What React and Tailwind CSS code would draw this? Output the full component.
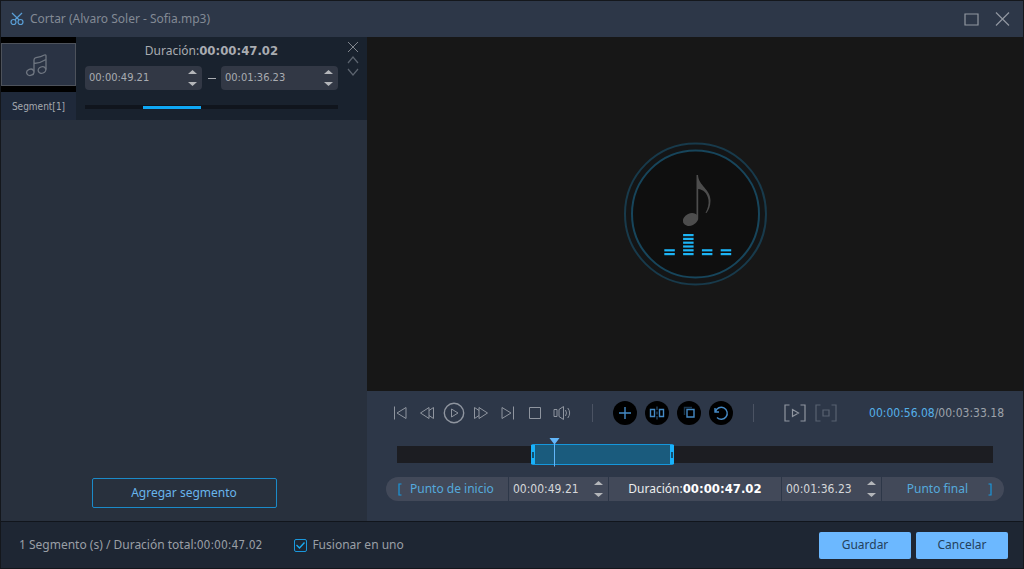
import {useState} from "react";

const playback = [
    {
        label: "Inicio",
        icon: (
            <svg width="14" height="14" viewBox="0 0 14 14">
                <path d="M1.5 0.5V13.5M13 1.5V12.5L4 7Z" />
            </svg>
        ),
    },
    {
        label: "Retroceder",
        icon: (
            <svg width="16" height="14" viewBox="0 0 16 14">
                <path d="M10 1.5V12.5L1.5 7ZM10 4.5L14.5 1.5V12.5L10 9.5" />
            </svg>
        ),
    },
    {
        label: "Reproducir",
        icon: (
            <svg width="22" height="22" viewBox="0 0 22 22">
                <circle cx="11" cy="11" r="9.7" strokeWidth="1.4" />
                <path d="M8.5 7V15L15 11Z" />
            </svg>
        ),
    },
    {
        label: "Avanzar",
        icon: (
            <svg width="16" height="14" viewBox="0 0 16 14">
                <path d="M6 1.5V12.5L14.5 7ZM6 4.5L1.5 1.5V12.5L6 9.5" />
            </svg>
        ),
    },
    {
        label: "Final",
        icon: (
            <svg width="14" height="14" viewBox="0 0 14 14">
                <path d="M12.5 0.5V13.5M1 1.5V12.5L10 7Z" />
            </svg>
        ),
    },
    {
        label: "Detener",
        icon: (
            <svg width="12" height="12" viewBox="0 0 12 12">
                <path d="M0.5 0.5H11.5V11.5H0.5Z" />
            </svg>
        ),
    },
    {
        label: "Volumen",
        icon: (
            <svg width="18" height="16" viewBox="0 0 18 16">
                <path d="M1 4.5H4V11.5H1ZM6 4.5L10.5 1.5V14.5L6 11.5ZM12.5 5Q14.5 8 12.5 11M14.8 3Q18.5 8 14.8 13" />
            </svg>
        ),
    },
];

const actions = [
    {
        label: "Agregar",
        icon: <path d="M12 6V18M6 12H18" />,
    },
    {
        label: "Dividir",
        icon: (
            <>
                <path d="M5.5 8.5H9.5V15.5H5.5ZM14.5 8.5H18.5V15.5H14.5Z" />
                <path d="M12 5.5V9M12 10.5V13.5M12 15V18.5" opacity="0.5" />
            </>
        ),
    },
    {
        label: "Copiar",
        icon: (
            <>
                <path d="M10 8.5H17V16H10Z" />
                <path d="M7.5 14V6.5H15" opacity="0.4" />
            </>
        ),
    },
    {
        label: "Restablecer",
        icon: <path d="M6 7V11H10M6.5 10.5A6 6 0 1 1 8 16.5" />,
    },
];

// columns of the equalizer, number of bars in each one
const equalizer = [2, 6, 2, 2];

function Time({children}) {
    return <span className="font-['DejaVu_Sans_Condensed','DejaVu_Sans',sans-serif]">{children}</span>;
}

function Spinner() {
    return (
        <div className="flex flex-col gap-2 px-[5px]">
            <button aria-label="Aumentar" className="block">
                <svg width="9" height="4" viewBox="0 0 9 4" className="fill-[#b4b6ba]">
                    <path d="M0 4L4.5 0L9 4Z" />
                </svg>
            </button>
            <button aria-label="Disminuir" className="block">
                <svg width="9" height="4" viewBox="0 0 9 4" className="fill-[#b4b6ba]">
                    <path d="M0 0L4.5 4L9 0Z" />
                </svg>
            </button>
        </div>
    );
}

function TimeBox({label, value, onChange}) {
    return (
        <div className="flex h-6 w-[117px] items-center rounded-sm bg-[#323845]">
            <input
                aria-label={label}
                value={value}
                onChange={(e) => onChange(e.target.value)}
                className="w-full min-w-0 bg-transparent pl-1 font-['DejaVu_Sans_Condensed','DejaVu_Sans',sans-serif] text-[11px] text-[#a9acb1] outline-none"
            />
            <Spinner />
        </div>
    );
}

function Separator() {
    return <div className="h-[18px] w-px bg-[#4b5363]" />;
}

function Segment({start, end, setStart, setEnd}) {
    return (
        <div className="flex h-[83px] bg-[#19222e]">
            <div className="flex w-[75px] shrink-0 flex-col">
                <div className="bg-black py-1.5">
                    <div className="flex h-[43px] items-center justify-center border border-[#4d525b] bg-[#2a3344] pr-1">
                        <svg width="24" height="24" viewBox="0 0 24 24" className="fill-none stroke-[#6f7681]" strokeWidth="1.3">
                            <ellipse cx="5.3" cy="19.3" rx="3.7" ry="3.1" transform="rotate(-20 5.3 19.3)" />
                            <ellipse cx="17" cy="17" rx="3.9" ry="3.2" transform="rotate(-20 17 17)" />
                            <path d="M9 18.5V7Q9 5 11 4.6Q16 4 19.5 2Q21 1.5 21 3V16.5M9 10.5Q15 10.3 21 6.5" />
                        </svg>
                    </div>
                </div>
                <div className="flex flex-1 items-center justify-center bg-[#1f293a] text-[10px] text-[#a4a8ae]">
                    <Time>Segment[1]</Time>
                </div>
            </div>
            <div className="flex flex-1 justify-between pl-[9px]">
                <div className="flex w-[253px] flex-col">
                    <p className="h-[29px] pt-[3px] text-center leading-5 text-[#a9acb1]">
                        Duración:
                        <b className="text-[13px]">
                            <Time>00:00:47.02</Time>
                        </b>
                    </p>
                    <div className="flex items-center justify-between">
                        <TimeBox label="Inicio del segmento" value={start} onChange={setStart} />
                        <span className="h-px w-2 bg-[#a9acb1]" />
                        <TimeBox label="Final del segmento" value={end} onChange={setEnd} />
                    </div>
                    <div className="mt-[15px] h-1 bg-[#10151d] pt-px">
                        <div className="ml-[23%] h-[3px] w-[23%] bg-[#0fa8f5]" />
                    </div>
                </div>
                <div className="flex w-7 flex-col items-center pt-1">
                    <button aria-label="Eliminar segmento">
                        <svg width="12" height="12" viewBox="0 0 12 12" className="fill-none stroke-[#80858d]">
                            <path d="M1 1L11 11M11 1L1 11" />
                        </svg>
                    </button>
                    <button aria-label="Subir" className="mt-[3px]">
                        <svg width="12" height="8" viewBox="0 0 12 8" className="fill-none stroke-[#5c646f]" strokeWidth="1.2">
                            <path d="M1 7L6 1L11 7" />
                        </svg>
                    </button>
                    <button aria-label="Bajar" className="mt-1">
                        <svg width="12" height="8" viewBox="0 0 12 8" className="fill-none stroke-[#5c646f]" strokeWidth="1.2">
                            <path d="M1 1L6 7L11 1" />
                        </svg>
                    </button>
                </div>
            </div>
        </div>
    );
}

function Preview() {
    return (
        <div className="flex min-h-0 flex-1 items-center justify-center bg-[#171717]">
            <svg width="144" height="144" viewBox="0 0 144 144">
                <circle cx="72.5" cy="72" r="70.5" fill="#141516" stroke="#183a4b" strokeWidth="2" />
                <circle cx="72.5" cy="72" r="63.5" fill="#0f0f0f" stroke="#17455b" strokeWidth="2" />
                <ellipse cx="67.5" cy="77.5" rx="8" ry="6" transform="rotate(-24 67.5 77.5)" fill="#4d4d4d" />
                <path
                    d="M73.5 33H75C75.5 44 87.5 47 87.5 58.5C87.5 64 85.5 68.5 83.5 71H82.5C85 66 86 62 85.5 58C84.5 51 80 47.5 75.2 47V76H73.5Z"
                    fill="#4d4d4d"
                />
                {equalizer.map((bars, col) =>
                    Array.from({length: bars}, (_, i) => (
                        <rect key={`${col}-${i}`} x={41.3 + col * 18.8} y={111 - i * 3.8} width="10.5" height="2.2" fill="#1cb4f5" />
                    ))
                )}
            </svg>
        </div>
    );
}

function Handle() {
    return (
        <div className="flex h-full w-1 items-center justify-center bg-[#19b1fa]">
            <span className="h-1.5 w-0.5 bg-[#15506f]" />
        </div>
    );
}

function Timeline() {
    return (
        <div className="relative mx-[11px] mt-[21px] h-[17px] bg-[#1c1d22]">
            <div className="absolute -top-0.5 -bottom-0.5 left-[22.5%] flex w-[24%] items-center justify-between rounded-xs border-y border-[#1597dc] bg-[#1a5b7d]">
                <Handle />
                <Handle />
            </div>
            <svg width="11" height="29" viewBox="0 0 11 29" className="absolute -top-2 left-[26.4%] -ml-[5px] fill-[#62b6f9]">
                <path d="M0.5 0H10.5L6 6V28.5H5V6Z" />
            </svg>
        </div>
    );
}

function Controls({start, end, setStart, setEnd}) {
    return (
        <div className="bg-[#2d3748] px-[19px] pt-2.5 pb-5">
            <div className="flex h-6 items-center">
                {playback.map((item) => (
                    <button key={item.label} aria-label={item.label} className="flex h-6 w-[27px] items-center justify-center fill-none stroke-[#8f959f]">
                        {item.icon}
                    </button>
                ))}
                <div className="mr-5 ml-[17px]">
                    <Separator />
                </div>
                <div className="flex gap-2">
                    {actions.map((item) => (
                        <button key={item.label} aria-label={item.label} className="h-6 w-6 rounded-full bg-black">
                            <svg width="24" height="24" viewBox="0 0 24 24" className="fill-none stroke-[#4489c4]" strokeWidth="1.4">
                                {item.icon}
                            </svg>
                        </button>
                    ))}
                </div>
                <div className="mr-[30px] ml-5">
                    <Separator />
                </div>
                <div className="flex gap-[9px]">
                    <button aria-label="Reproducir segmento">
                        <svg width="22" height="18" viewBox="0 0 22 18" className="fill-none stroke-[#8f959f]" strokeWidth="1.2">
                            <path d="M5.5 1H1V17H5.5M16.5 1H21V17H16.5M8.5 5.5V12.5L14.5 9Z" />
                        </svg>
                    </button>
                    <button aria-label="Detener segmento">
                        <svg width="22" height="18" viewBox="0 0 22 18" className="fill-none stroke-[#596271]" strokeWidth="1.2">
                            <path d="M5.5 1H1V17H5.5M16.5 1H21V17H16.5M8 6H14V12H8Z" />
                        </svg>
                    </button>
                </div>
                <p className="ml-auto whitespace-nowrap text-[#9da2aa]">
                    <Time>
                        <span className="text-[#55b0ea]">00:00:56.08</span>/00:03:33.18
                    </Time>
                </p>
            </div>
            <Timeline />
            <div className="mt-3.5 flex h-6 gap-px overflow-hidden rounded-full bg-[#2d3748] text-[#d5d7da]">
                <button className="flex w-[122px] items-center bg-[#424959] pl-3 text-[#55a9dc]">
                    <svg width="4" height="13" viewBox="0 0 4 13" className="fill-none stroke-[#1a97dc]" strokeWidth="1.2">
                        <path d="M3.5 1H1V12H3.5" />
                    </svg>
                    <span className="ml-2">Punto de inicio</span>
                </button>
                <div className="flex w-[99px] items-center bg-[#424959]">
                    <input
                        aria-label="Punto de inicio"
                        value={start}
                        onChange={(e) => setStart(e.target.value)}
                        className="w-full min-w-0 bg-transparent pl-1 font-['DejaVu_Sans_Condensed','DejaVu_Sans',sans-serif] outline-none"
                    />
                    <Spinner />
                </div>
                <p className="flex flex-1 items-center justify-center bg-[#424959] text-[#eceded]">
                    Duración:
                    <b className="text-[13px] text-white">
                        <Time>00:00:47.02</Time>
                    </b>
                </p>
                <div className="flex w-[99px] items-center bg-[#424959]">
                    <input
                        aria-label="Punto final"
                        value={end}
                        onChange={(e) => setEnd(e.target.value)}
                        className="w-full min-w-0 bg-transparent pl-1 font-['DejaVu_Sans_Condensed','DejaVu_Sans',sans-serif] outline-none"
                    />
                    <Spinner />
                </div>
                <button className="flex w-[122px] items-center justify-end bg-[#424959] pr-3 text-[#55a9dc]">
                    <span className="mr-5">Punto final</span>
                    <svg width="4" height="13" viewBox="0 0 4 13" className="fill-none stroke-[#1a97dc]" strokeWidth="1.2">
                        <path d="M0.5 1H3V12H0.5" />
                    </svg>
                </button>
            </div>
        </div>
    );
}

export default function App() {
    const [start, setStart] = useState("00:00:49.21");
    const [end, setEnd] = useState("00:01:36.23");
    const [merge, setMerge] = useState(true);

    return (
        <div className="flex h-screen flex-col border border-[#14171c] bg-[#2d3748] font-['Noto_Sans','DejaVu_Sans',sans-serif] text-[12px]">
            <header className="flex h-9 shrink-0 items-center justify-between bg-[#2d3748] pr-[13px] pl-[9px]">
                <div className="flex items-center gap-1.5">
                    <svg width="14" height="14" viewBox="0 0 14 14" className="fill-none stroke-[#5a9fd6]" strokeWidth="1.2">
                        <circle cx="3.5" cy="10" r="2.5" />
                        <circle cx="10.5" cy="10" r="2.5" />
                        <path d="M2 1L9.2 8M12 1L4.8 8" />
                    </svg>
                    <h1 className="text-[#838a95]">Cortar (Alvaro Soler - Sofia.mp3)</h1>
                </div>
                <div className="flex items-center gap-4">
                    <button aria-label="Maximizar">
                        <svg width="15" height="13" viewBox="0 0 15 13" className="fill-none stroke-[#9197a0]" strokeWidth="1.2">
                            <path d="M1 1H14V12H1Z" />
                        </svg>
                    </button>
                    <button aria-label="Cerrar">
                        <svg width="15" height="14" viewBox="0 0 15 14" className="fill-none stroke-[#9197a0]" strokeWidth="1.2">
                            <path d="M1 0.5L14 13.5M14 0.5L1 13.5" />
                        </svg>
                    </button>
                </div>
            </header>
            <main className="flex min-h-0 flex-1">
                <aside className="flex w-[366px] shrink-0 flex-col justify-between bg-[#28303d]">
                    <Segment start={start} end={end} setStart={setStart} setEnd={setEnd} />
                    <div className="flex justify-center pb-[13px]">
                        <button className="h-[30px] w-[185px] rounded-xs border border-[#1b8ac9] text-[#68b5ec]">Agregar segmento</button>
                    </div>
                </aside>
                <section className="flex min-w-0 flex-1 flex-col">
                    <Preview />
                    <Controls start={start} end={end} setStart={setStart} setEnd={setEnd} />
                </section>
            </main>
            <footer className="flex h-[47px] shrink-0 items-center border-t border-[#11151c] bg-[#1e2633] pr-[15px] pl-[18px] text-[#9a9fa6]">
                <p>
                    1 Segmento (s) / Duración total:<Time>00:00:47.02</Time>
                </p>
                <label className="ml-8 flex items-center gap-[5px]">
                    <span className="grid">
                        <input
                            type="checkbox"
                            checked={merge}
                            onChange={(e) => setMerge(e.target.checked)}
                            className="peer col-start-1 row-start-1 h-[13px] w-[13px] appearance-none rounded-xs border border-[#1a97dc]"
                        />
                        <svg width="13" height="13" viewBox="0 0 13 13" className="pointer-events-none invisible col-start-1 row-start-1 fill-none stroke-[#1aabf2] peer-checked:visible" strokeWidth="1.4">
                            <path d="M2.5 6L5.5 9L10.5 3.5" />
                        </svg>
                    </span>
                    Fusionar en uno
                </label>
                <div className="ml-auto flex gap-[5px] text-[#24415c]">
                    <button className="h-[27px] w-[92px] rounded-xs bg-[#6cb8ff]">Guardar</button>
                    <button className="h-[27px] w-[92px] rounded-xs bg-[#6cb8ff]">Cancelar</button>
                </div>
            </footer>
        </div>
    );
}
